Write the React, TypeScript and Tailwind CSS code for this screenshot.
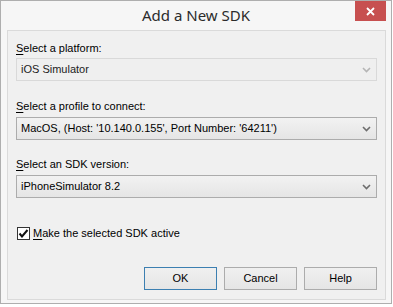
import React from "react";

const font = { fontFamily: '"Liberation Sans", Arial, sans-serif' };
const titleFont = { fontFamily: '"Noto Sans", sans-serif' };

function Chevron({ disabled }: { disabled?: boolean }) {
  return (
    <svg width="9" height="6" viewBox="0 0 9 6" className="shrink-0">
      <path
        d="M1 1 L4.5 4.5 L8 1"
        fill="none"
        stroke={disabled ? "#b5b5b5" : "#6d6d6d"}
        strokeWidth="1.6"
      />
    </svg>
  );
}

function Combo({ value, disabled }: { value: string; disabled?: boolean }) {
  return (
    <div
      className={
        disabled
          ? "flex h-[23px] items-center justify-between border border-[#d9d9d9] bg-[#efefef] pl-[4px] pr-[5px] text-[#222]"
          : "flex h-[23px] items-center justify-between border border-[#acacac] bg-gradient-to-b from-[#f2f2f2] to-[#e5e5e5] pl-[4px] pr-[5px] text-black"
      }
    >
      <span className="text-[11px] leading-none whitespace-nowrap">{value}</span>
      <Chevron disabled={disabled} />
    </div>
  );
}

function Label({ first, rest }: { first: string; rest: string }) {
  return (
    <div className="h-[16px] text-[11px] leading-[16px] text-black">
      <span className="underline underline-offset-2">{first}</span>
      {rest}
    </div>
  );
}

function Btn({ label, primary }: { label: string; primary?: boolean }) {
  return (
    <button
      className={
        "flex h-[23px] w-[73px] items-center justify-center bg-gradient-to-b from-[#f0f0f0] to-[#e5e5e5] text-[11px] text-black " +
        (primary ? "border border-[#3c7fb1]" : "border border-[#acacac]")
      }
    >
      {label}
    </button>
  );
}

export default function App() {
  return (
    <div className="h-[307px] w-[393px] bg-white" style={font}>
      <div className="flex h-[304px] w-[392px] flex-col border border-[#aeaeae] bg-[#f6f6f6]">
        {/* Title bar */}
        <div className="relative flex h-[29px] items-center justify-center">
          <span className="text-[15px] leading-none text-[#2b2b2b]" style={titleFont}>
            Add a New SDK
          </span>
          <div className="absolute right-[5px] top-0 flex h-[20px] w-[31px] items-center justify-center bg-[#c75050]">
            <svg width="9" height="9" viewBox="0 0 9 9">
              <path d="M1 1 L8 8 M8 1 L1 8" stroke="#fff" strokeWidth="1.8" />
            </svg>
          </div>
        </div>

        {/* Client area */}
        <div className="ml-[6px] mr-[5px] flex h-[270px] flex-col border border-[#dadada] bg-[#f0f0f0] px-[8px]">
          <div className="mt-[9px]">
            <Label first="S" rest="elect a platform:" />
          </div>
          <div className="mt-[2px]">
            <Combo value="iOS Simulator" disabled />
          </div>

          <div className="mt-[17px]">
            <Label first="S" rest="elect a profile to connect:" />
          </div>
          <div className="mt-[3px]">
            <Combo value="MacOS, (Host: '10.140.0.155', Port Number: '64211')" />
          </div>

          <div className="mt-[16px]">
            <Label first="S" rest="elect an SDK version:" />
          </div>
          <div className="mt-[3px]">
            <Combo value="iPhoneSimulator 8.2" />
          </div>

          <div className="mt-[27px] flex h-[16px] items-center gap-[3px] pl-[1px]">
            <div className="flex h-[13px] w-[13px] items-center justify-center border border-[#333] bg-white">
              <svg width="11" height="9" viewBox="0 0 11 9">
                <path d="M1.5 4.5 L4 7.5 L9.5 1" fill="none" stroke="#111" strokeWidth="2" />
              </svg>
            </div>
            <span className="text-[11px] leading-none text-black">
              <span className="underline underline-offset-2">M</span>ake the selected SDK active
            </span>
          </div>

          <div className="mt-[26px] flex justify-end gap-[7px]">
            <Btn label="OK" primary />
            <Btn label="Cancel" />
            <Btn label="Help" />
          </div>
        </div>
      </div>
    </div>
  );
}
